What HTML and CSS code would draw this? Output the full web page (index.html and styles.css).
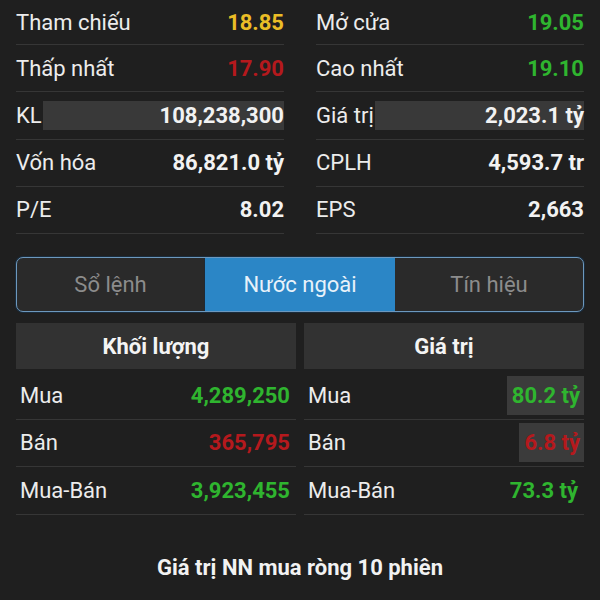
FILE: index.html
```html
<!DOCTYPE html>
<html lang="vi">
<head>
<meta charset="utf-8">
<link rel="stylesheet" href="styles.css">
</head>
<body>
<div class="page">
  <div class="stats">
    <div class="col">
      <div class="stat"><span class="lbl">Tham chiếu</span><span class="val ref">18.85</span></div>
      <div class="stat"><span class="lbl">Thấp nhất</span><span class="val down">17.90</span></div>
      <div class="stat"><span class="lbl">KL</span><span class="val hl">108,238,300</span></div>
      <div class="stat"><span class="lbl">Vốn hóa</span><span class="val">86,821.0 tỷ</span></div>
      <div class="stat"><span class="lbl">P/E</span><span class="val">8.02</span></div>
    </div>
    <div class="col">
      <div class="stat"><span class="lbl">Mở cửa</span><span class="val up">19.05</span></div>
      <div class="stat"><span class="lbl">Cao nhất</span><span class="val up">19.10</span></div>
      <div class="stat"><span class="lbl">Giá trị</span><span class="val hl">2,023.1 tỷ</span></div>
      <div class="stat"><span class="lbl">CPLH</span><span class="val">4,593.7 tr</span></div>
      <div class="stat"><span class="lbl">EPS</span><span class="val">2,663</span></div>
    </div>
  </div>

  <div class="tabs">
    <div class="tab">Sổ lệnh</div>
    <div class="tab active">Nước ngoài</div>
    <div class="tab">Tín hiệu</div>
  </div>

  <div class="foreign">
    <div class="fcol">
      <div class="fhead">Khối lượng</div>
      <div class="frow"><span class="flbl">Mua</span><span class="fval up">4,289,250</span></div>
      <div class="frow"><span class="flbl">Bán</span><span class="fval down">365,795</span></div>
      <div class="frow"><span class="flbl">Mua-Bán</span><span class="fval up">3,923,455</span></div>
    </div>
    <div class="fcol">
      <div class="fhead">Giá trị</div>
      <div class="frow"><span class="flbl">Mua</span><span class="fval up boxed">80.2 tỷ</span></div>
      <div class="frow"><span class="flbl">Bán</span><span class="fval down boxed">6.8 tỷ</span></div>
      <div class="frow"><span class="flbl">Mua-Bán</span><span class="fval up">73.3 tỷ</span></div>
    </div>
  </div>

  <div class="footer">Giá trị NN mua ròng 10 phiên</div>
</div>
</body>
</html>
```

FILE: styles.css
```css
html, body {
  margin: 0;
  padding: 0;
  background: #1f1f1f;
}
body {
  font-family: Roboto, "Noto Sans", "Liberation Sans", sans-serif;
  color: #ececec;
  width: 600px;
  height: 600px;
  overflow: hidden;
}
.page {
  padding: 0 16px;
}
.stats {
  display: grid;
  grid-template-columns: 1fr 1fr;
  column-gap: 32px;
}
.col {
  display: flex;
  flex-direction: column;
}
.stat {
  height: 46.25px;
  border-bottom: 1px solid #363636;
  display: flex;
  align-items: center;
  justify-content: space-between;
  font-size: 22px;
}
.stat:first-child {
  height: 44px;
}
.lbl {
  color: #ececec;
  white-space: nowrap;
}
.val {
  font-weight: 700;
  font-size: 22px;
  color: #f2f2f2;
  white-space: nowrap;
}
.val.hl {
  flex: 1;
  height: 29px;
  line-height: 29px;
  background: #393939;
  text-align: right;
  margin-left: 1px;
}
.ref { color: #ebbd26; }
.up { color: #2fb52f; }
.down { color: #b5191d; }

.tabs {
  margin-top: 23px;
  height: 53px;
  display: grid;
  grid-template-columns: 188px 190px 1fr;
  border: 1px solid #6d98bd;
  border-radius: 7px;
  overflow: hidden;
  background: #2a2a2a;
  box-shadow: 0 0 0 1px #1a2c3c;
}
.tab {
  display: flex;
  align-items: center;
  justify-content: center;
  font-size: 22px;
  color: #8c8c8c;
}
.tab:first-child {
  border-right: 1px solid #1e2a36;
}
.tab.active {
  background: #2b86c6;
  color: #e8f2fa;
}

.foreign {
  margin-top: 11px;
  display: grid;
  grid-template-columns: 1fr 1fr;
  column-gap: 8px;
}
.fcol {
  display: flex;
  flex-direction: column;
}
.fhead {
  height: 46px;
  background: #323232;
  display: flex;
  align-items: center;
  justify-content: center;
  font-weight: 700;
  font-size: 22px;
  color: #f4f4f4;
  margin-bottom: 3px;
}
.frow {
  height: 46.5px;
  border-bottom: 1px solid #363636;
  display: flex;
  align-items: center;
  justify-content: space-between;
  padding: 0 4px;
  font-size: 22px;
}
.flbl {
  color: #ececec;
}
.fval {
  font-weight: 700;
  font-size: 22px;
  padding: 0 2px;
}
.fval.boxed {
  background: #3b3b3b;
  height: 39px;
  line-height: 39px;
  padding: 0 4px 0 5px;
  margin-right: -4px;
}

.footer {
  margin-top: 40px;
  text-align: center;
  font-weight: 700;
  font-size: 22px;
  color: #f2f2f2;
}
```
